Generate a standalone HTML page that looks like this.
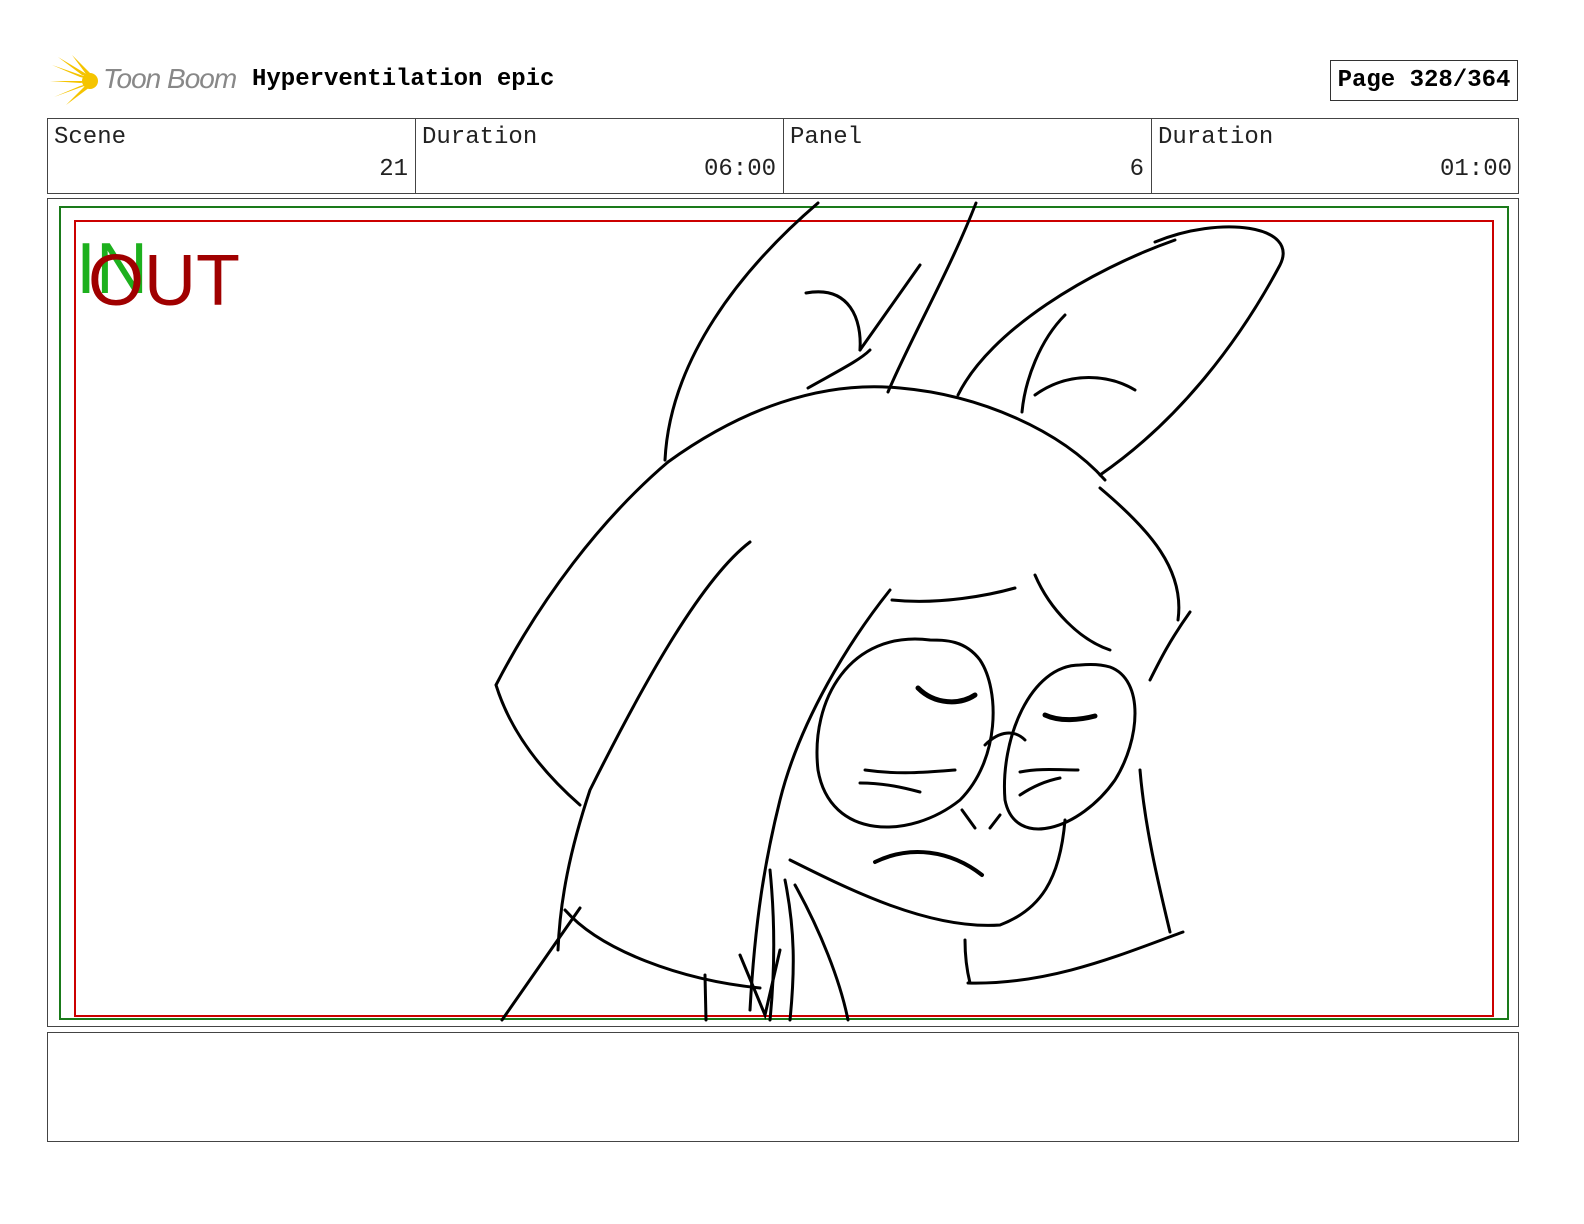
<!DOCTYPE html>
<html><head><style>
body{margin:0;background:#fff;width:1584px;height:1224px;position:relative;overflow:hidden;font-family:"Liberation Mono",monospace}
.a{position:absolute}
.t{font-size:24px;color:#222;position:absolute}
</style></head><body>
<svg class="a" style="left:50px;top:55px" width="52" height="52" viewBox="0 0 52 52">
<g fill="#f5c400"><path d="M48 26 L2 10 L30 22Z"/><path d="M48 26 L8 2 L32 20Z"/><path d="M48 26 L22 0 L36 19Z"/><path d="M48 26 L0 26 L30 28Z"/><path d="M48 26 L4 42 L30 31Z"/><path d="M48 26 L16 50 L34 32Z"/><circle cx="40" cy="26" r="8"/></g></svg>
<div class="a" style="left:103px;top:63px;font:italic 28px 'Liberation Sans',sans-serif;color:#888;letter-spacing:-1px">Toon Boom</div>
<div class="a" style="left:252px;top:66px;font:bold 24px 'Liberation Mono',monospace">Hyperventilation epic</div>
<div class="a" style="left:1330px;top:60px;width:186px;height:39px;border:1px solid #333;font:bold 24px 'Liberation Mono',monospace;line-height:39px;text-align:center">Page 328/364</div>
<div class="a" style="left:47px;top:118px;width:1470px;height:74px;border:1px solid #444"></div>
<div class="a" style="left:415px;top:118px;width:1px;height:75px;background:#444"></div>
<div class="a" style="left:783px;top:118px;width:1px;height:75px;background:#444"></div>
<div class="a" style="left:1151px;top:118px;width:1px;height:75px;background:#444"></div>
<div class="t" style="left:54px;top:124px">Scene</div>
<div class="t" style="left:422px;top:124px">Duration</div>
<div class="t" style="left:790px;top:124px">Panel</div>
<div class="t" style="left:1158px;top:124px">Duration</div>
<div class="t" style="right:1176px;top:156px">21</div>
<div class="t" style="right:808px;top:156px">06:00</div>
<div class="t" style="right:440px;top:156px">6</div>
<div class="t" style="right:72px;top:156px">01:00</div>
<div class="a" style="left:47px;top:198px;width:1470px;height:827px;border:1px solid #444"></div>
<div class="a" style="left:59px;top:206px;width:1446px;height:810px;border:2px solid #1a7a1a"></div>
<div class="a" style="left:74px;top:220px;width:1416px;height:793px;border:2px solid #c00"></div>
<div class="a" style="left:76px;top:228px;font:72px 'Liberation Sans',sans-serif;color:#1db01d">IN</div>
<div class="a" style="left:88px;top:240px;font:72px 'Liberation Sans',sans-serif;color:#a00000">OUT</div>
<svg class="a" style="left:0;top:0" width="1584" height="1224" fill="none" stroke="#000" stroke-width="3" stroke-linecap="round">
<path d="M818 203 C740 270 670 360 665 460"/>
<path d="M976 203 C950 270 910 340 888 392"/>
<path d="M920 265 L860 350"/>
<path d="M806 293 C850 285 862 320 860 350"/>
<path d="M808 388 C840 370 860 360 870 350"/>
<path d="M668 462 C740 410 820 380 900 388 C980 395 1060 430 1105 480"/>
<path d="M1155 242 C1220 215 1300 225 1280 265 C1240 340 1180 420 1100 475"/>
<path d="M1175 240 C1090 270 990 330 958 395"/>
<path d="M1065 315 C1040 340 1025 380 1022 412"/>
<path d="M1035 395 C1070 370 1110 375 1135 390"/>
<path d="M1100 488 C1150 530 1185 570 1178 620"/>
<path d="M668 462 C600 520 540 600 496 685 C510 730 540 770 580 805"/>
<path d="M750 542 C700 580 640 690 590 790 C570 850 560 900 558 950"/>
<path d="M565 910 C600 950 680 980 760 988"/>
<path d="M580 908 L502 1020"/>
<path d="M890 590 C850 640 800 720 780 800 C765 860 755 920 750 1010"/>
<path d="M892 600 C940 605 990 595 1015 588"/>
<path d="M1035 575 C1050 610 1080 640 1110 650"/>
<path d="M1190 612 C1170 640 1160 660 1150 680"/>
<path d="M930 640 C850 630 810 700 818 770 C830 840 910 840 960 800 C1000 760 1000 690 980 660 C965 640 945 640 930 640"/>
<path d="M1080 665 C1030 665 1000 740 1005 800 C1015 850 1080 830 1115 780 C1140 740 1145 680 1110 667 C1100 664 1090 664 1080 665"/>
<path d="M985 745 C1000 730 1015 730 1025 740"/>
<path d="M918 688 C935 705 960 705 975 695" stroke-width="5"/>
<path d="M1045 715 C1060 722 1080 720 1095 716" stroke-width="5"/>
<path d="M865 770 C900 775 930 772 955 770"/>
<path d="M860 783 C885 783 905 788 920 792"/>
<path d="M1020 772 C1040 768 1060 770 1078 770"/>
<path d="M1020 795 C1035 785 1050 780 1060 778"/>
<path d="M962 810 L975 828"/>
<path d="M990 828 L1000 815"/>
<path d="M875 862 C910 845 950 850 982 875" stroke-width="4"/>
<path d="M790 860 C850 890 930 930 1000 925 C1040 910 1060 880 1065 820"/>
<path d="M1140 770 C1145 830 1160 890 1170 932"/>
<path d="M1183 932 C1120 955 1050 985 968 983"/>
<path d="M965 940 C965 960 968 975 970 983"/>
<path d="M770 870 C775 920 775 970 770 1020"/>
<path d="M785 880 C795 930 795 970 790 1020"/>
<path d="M795 885 C820 930 840 980 848 1020"/>
<path d="M705 975 L706 1020"/>
<path d="M740 955 L765 1015 L780 950"/>
</svg>
<div class="a" style="left:47px;top:1032px;width:1470px;height:108px;border:1px solid #444"></div>
</body></html>
